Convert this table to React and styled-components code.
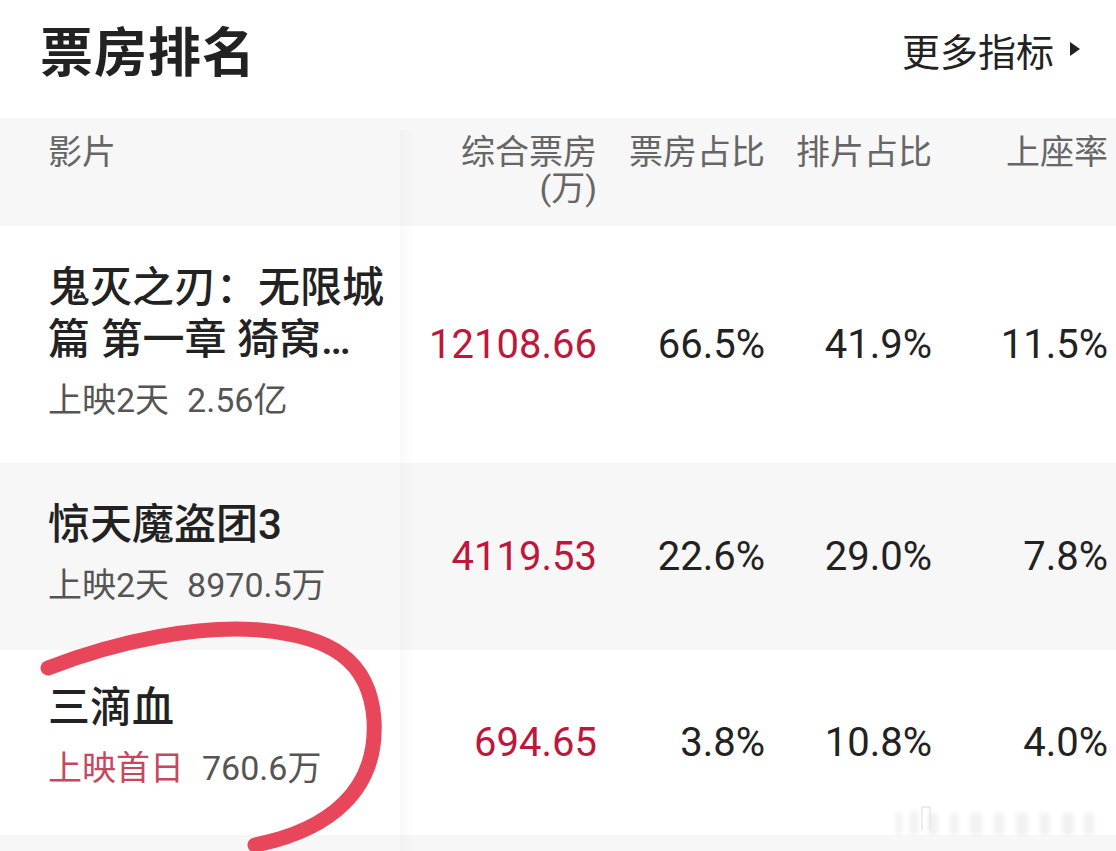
import React from 'react';
import styled, { createGlobalStyle } from 'styled-components';

const GlobalStyle = createGlobalStyle`
  html, body {
    margin: 0;
    padding: 0;
    background: #fff;
    font-family: Roboto, "Noto Sans CJK SC", sans-serif;
    color: #222;
  }
`;

const Page = styled.div`
  position: relative;
  width: 1116px;
  height: 851px;
  overflow: hidden;
  background: #fff;
`;

const TopBar = styled.div`
  display: flex;
  align-items: center;
  justify-content: space-between;
  height: 118px;
  padding: 0 36px 20px 40px;
  box-sizing: border-box;
`;

const Title = styled.h1`
  margin: 0;
  font-size: 53px;
  font-weight: 700;
  letter-spacing: 1px;
  color: #222;
`;

const MoreLink = styled.div`
  display: flex;
  align-items: center;
  gap: 16px;
  font-size: 38px;
  color: #222;
`;

const Caret = styled.span`
  width: 0;
  height: 0;
  border-top: 7px solid transparent;
  border-bottom: 7px solid transparent;
  border-left: 10px solid #222;
`;

const Table = styled.div`
  display: flex;
  flex-direction: column;
`;

const Row = styled.div`
  display: grid;
  grid-template-columns: 400px 197px 168px 167px 176px;
  padding-right: 8px;
  background: ${p => (p.$shade ? '#f7f7f7' : '#fff')};
  min-height: ${p => p.$height || 'auto'};
`;

const NameCell = styled.div`
  position: relative;
  padding: ${p => p.$pad || '36px 0 41px 48px'};
  box-sizing: border-box;
  &::after {
    content: '';
    position: absolute;
    top: ${p => (p.$head ? '12px' : '0')};
    bottom: 0;
    right: -16px;
    width: 16px;
    background: linear-gradient(to right, rgba(0, 0, 0, 0.025), rgba(0, 0, 0, 0));
  }
`;

const HeadLabel = styled.div`
  font-size: 34px;
  line-height: 36px;
  color: #666;
  text-align: ${p => p.$align || 'left'};
`;

const HeadCell = styled.div`
  padding-top: 16px;
  display: flex;
  flex-direction: column;
  align-items: flex-end;
`;

const FilmName = styled.div`
  max-width: 340px;
  font-size: 42px;
  line-height: 52px;
  font-weight: 500;
  color: #222;
  display: -webkit-box;
  -webkit-line-clamp: 2;
  -webkit-box-orient: vertical;
  overflow: hidden;
  word-break: break-all;
`;

const FilmMeta = styled.div`
  margin-top: 12px;
  font-size: 34px;
  line-height: 44px;
  color: #555;
  display: flex;
  gap: 18px;
`;

const MetaTag = styled.span`
  color: ${p => (p.$hot ? '#c6485f' : '#555')};
`;

const ValueCell = styled.div`
  display: flex;
  align-items: center;
  justify-content: flex-end;
  font-size: 40px;
  color: ${p => (p.$red ? '#bf163b' : '#222')};
`;

const Mark = styled.svg`
  position: absolute;
  left: 0;
  top: 0;
  pointer-events: none;
`;

const Watermark = styled.svg`
  position: absolute;
  right: 8px;
  bottom: 10px;
  opacity: 0.35;
`;

const films = [
  {
    name: '鬼灭之刃：无限城篇 第一章 猗窝座再袭',
    tag: '上映2天',
    total: '2.56亿',
    box: '12108.66',
    share: '66.5%',
    shows: '41.9%',
    seat: '11.5%',
    height: '237px',
  },
  {
    name: '惊天魔盗团3',
    tag: '上映2天',
    total: '8970.5万',
    box: '4119.53',
    share: '22.6%',
    shows: '29.0%',
    seat: '7.8%',
    shade: true,
    height: '187px',
  },
  {
    name: '三滴血',
    tag: '上映首日',
    hot: true,
    total: '760.6万',
    box: '694.65',
    share: '3.8%',
    shows: '10.8%',
    seat: '4.0%',
    height: '185px',
    pad: '32px 0 41px 48px',
  },
];

export default function App() {
  return (
    <Page>
      <GlobalStyle />
      <TopBar>
        <Title>票房排名</Title>
        <MoreLink>
          更多指标
          <Caret />
        </MoreLink>
      </TopBar>
      <Table>
        <Row $shade $height="108px">
          <NameCell $head $pad="16px 0 0 48px">
            <HeadLabel>影片</HeadLabel>
          </NameCell>
          <HeadCell>
            <HeadLabel $align="right">综合票房</HeadLabel>
            <HeadLabel>(万)</HeadLabel>
          </HeadCell>
          <HeadCell>
            <HeadLabel>票房占比</HeadLabel>
          </HeadCell>
          <HeadCell>
            <HeadLabel>排片占比</HeadLabel>
          </HeadCell>
          <HeadCell>
            <HeadLabel>上座率</HeadLabel>
          </HeadCell>
        </Row>
        {films.map(f => (
          <Row key={f.name} $shade={f.shade} $height={f.height}>
            <NameCell $pad={f.pad}>
              <FilmName>{f.name}</FilmName>
              <FilmMeta>
                <MetaTag $hot={f.hot}>{f.tag}</MetaTag>
                <span>{f.total}</span>
              </FilmMeta>
            </NameCell>
            <ValueCell $red>{f.box}</ValueCell>
            <ValueCell>{f.share}</ValueCell>
            <ValueCell>{f.shows}</ValueCell>
            <ValueCell>{f.seat}</ValueCell>
          </Row>
        ))}
        <Row $shade $height="40px">
          <NameCell $pad="0" />
        </Row>
      </Table>
      <Mark width="1116" height="851" viewBox="0 0 1116 851">
        <path
          d="M48 668 C120 640 200 625 260 630 C330 636 370 660 374 720 C378 790 330 830 255 845"
          fill="none"
          stroke="#e8475b"
          strokeWidth="15"
          strokeLinecap="round"
        />
      </Mark>
      <Watermark width="220" height="40" viewBox="0 0 220 40">
        <defs>
          <filter id="wmblur">
            <feGaussianBlur stdDeviation="2" />
          </filter>
        </defs>
        <g fill="#d8d8d8" filter="url(#wmblur)">
          <rect x="8" y="12" width="6" height="22" />
          <rect x="22" y="10" width="8" height="24" />
          <rect x="40" y="12" width="10" height="22" />
          <rect x="62" y="12" width="8" height="22" />
          <rect x="82" y="12" width="12" height="22" />
          <rect x="106" y="12" width="10" height="22" />
          <rect x="128" y="12" width="12" height="22" />
          <rect x="152" y="12" width="10" height="22" />
          <rect x="174" y="12" width="12" height="22" />
          <rect x="196" y="12" width="10" height="22" />
        </g>
        <path d="M34 30 V6 H42 V30" fill="none" stroke="#bbb" strokeWidth="1.5" />
      </Watermark>
    </Page>
  );
}
